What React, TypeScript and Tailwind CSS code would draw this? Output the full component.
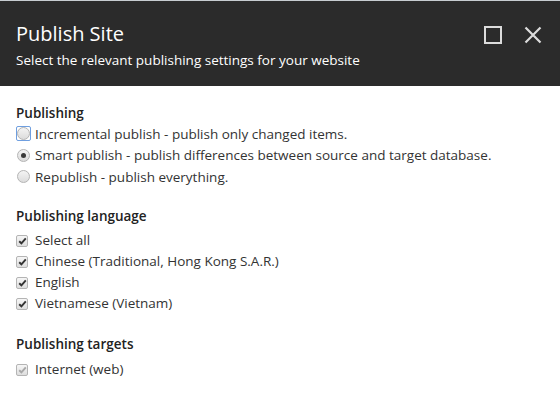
import React from "react";

const font = { fontFamily: '"Open Sans", "Noto Sans", sans-serif' };

function Radio({ checked, focused }: { checked?: boolean; focused?: boolean }) {
  return (
    <span
      className={
        "flex h-[15px] w-[15px] shrink-0 items-center justify-center rounded-[2px] " +
        (focused ? "border border-[#6f9fe0]" : "border border-transparent")
      }
    >
      <span className="flex h-[13px] w-[13px] items-center justify-center rounded-full border border-[#b4b4b4] bg-gradient-to-b from-[#f4f4f4] to-[#dcdcdc]">
        {checked && <span className="h-[5px] w-[5px] rounded-full bg-[#3a3a3a]" />}
      </span>
    </span>
  );
}

function Check({ disabled }: { disabled?: boolean }) {
  return (
    <span className="flex h-[12px] w-[12px] shrink-0 items-center justify-center rounded-[2px] border border-[#b4b4b4] bg-gradient-to-b from-[#f6f6f6] to-[#dedede]">
      <svg width="9" height="8" viewBox="0 0 9 8">
        <path
          d="M1.2 4.2 L3.4 6.3 L7.8 1.4"
          fill="none"
          stroke={disabled ? "#a8a8a8" : "#333"}
          strokeWidth="1.9"
        />
      </svg>
    </span>
  );
}

function Row({ control, label, tall }: { control: React.ReactNode; label: string; tall?: boolean }) {
  return (
    <div className={"flex items-center " + (tall ? "h-[21.5px]" : "h-[21px]")}>
      <span className="flex w-[19px] justify-start">{control}</span>
      <span className="text-[13.5px] text-[#333]">{label}</span>
    </div>
  );
}

function Heading({ children }: { children: React.ReactNode }) {
  return <h3 className="text-[13.5px] leading-[20px] font-semibold text-[#222]">{children}</h3>;
}

export default function App() {
  return (
    <div className="flex h-[409px] w-[560px] flex-col bg-white" style={font}>
      <div className="h-px bg-[#c7ccd1]" />
      <div className="flex h-[85px] justify-between bg-[#2b2b2b] pl-4 pr-[18px] pt-[19px]">
        <div className="flex flex-col">
          <h1 className="text-[20px] leading-[28px] text-white">Publish Site</h1>
          <p className="mt-[2px] text-[13.5px] leading-[20px] text-white">
            Select the relevant publishing settings for your website
          </p>
        </div>
        <div className="flex items-start gap-[22px] pt-[6px]">
          <svg width="18" height="18" viewBox="0 0 18 18">
            <rect x="1" y="1" width="16" height="16" fill="none" stroke="#dcdcdc" strokeWidth="2" />
          </svg>
          <svg width="18" height="18" viewBox="0 0 18 18">
            <path d="M1.5 1.5 L16.5 16.5 M16.5 1.5 L1.5 16.5" stroke="#dcdcdc" strokeWidth="2.2" />
          </svg>
        </div>
      </div>
      <div className="flex flex-col px-4 pt-[17px]">
        <Heading>Publishing</Heading>
        <Row tall control={<Radio focused />} label="Incremental publish - publish only changed items." />
        <Row tall control={<Radio checked />} label="Smart publish - publish differences between source and target database." />
        <Row tall control={<Radio />} label="Republish - publish everything." />

        <div className="mt-[18px]">
          <Heading>Publishing language</Heading>
        </div>
        <div className="mt-[4.5px] flex flex-col">
          <Row control={<Check />} label="Select all" />
          <Row control={<Check />} label="Chinese (Traditional, Hong Kong S.A.R.)" />
          <Row control={<Check />} label="English" />
          <Row control={<Check />} label="Vietnamese (Vietnam)" />
        </div>

        <div className="mt-[19.5px]">
          <Heading>Publishing targets</Heading>
        </div>
        <div className="mt-[5.5px] flex flex-col">
          <Row control={<Check disabled />} label="Internet (web)" />
        </div>
      </div>
    </div>
  );
}
